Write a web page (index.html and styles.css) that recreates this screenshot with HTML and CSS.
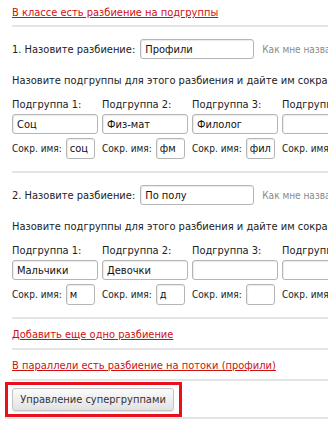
FILE: index.html
```html
<!DOCTYPE html>
<html lang="ru">
<head>
    <meta charset="UTF-8">
    <title>Разбиения</title>
    <link rel="stylesheet" href="styles.css">
</head>
<body>
    <div class="page">
        <div class="section first">
            <a href="#" class="red-link">В классе есть разбиение на подгруппы</a>
        </div>

        <div class="split">
            <div class="split-name">
                <span>1. Назовите разбиение:</span>
                <input type="text" class="name-input" value="Профили">
                <span class="hint">Как мне назвать разбиение?</span>
            </div>
            <div class="split-text">Назовите подгруппы для этого разбиения и дайте им сокращенные имена</div>
            <div class="groups">
                <div class="group">
                    <div class="group-label">Подгруппа 1:</div>
                    <input type="text" class="group-input" value="Соц">
                    <div class="short"><span>Сокр. имя:</span><input type="text" class="short-input" value="соц"></div>
                </div>
                <div class="group">
                    <div class="group-label">Подгруппа 2:</div>
                    <input type="text" class="group-input" value="Физ-мат">
                    <div class="short"><span>Сокр. имя:</span><input type="text" class="short-input" value="фм"></div>
                </div>
                <div class="group">
                    <div class="group-label">Подгруппа 3:</div>
                    <input type="text" class="group-input" value="Филолог">
                    <div class="short"><span>Сокр. имя:</span><input type="text" class="short-input" value="фил"></div>
                </div>
                <div class="group">
                    <div class="group-label">Подгруппа 4:</div>
                    <input type="text" class="group-input" value="">
                    <div class="short"><span>Сокр. имя:</span><input type="text" class="short-input" value=""></div>
                </div>
            </div>
        </div>

        <div class="split">
            <div class="split-name">
                <span>2. Назовите разбиение:</span>
                <input type="text" class="name-input" value="По полу">
                <span class="hint">Как мне назвать разбиение?</span>
            </div>
            <div class="split-text">Назовите подгруппы для этого разбиения и дайте им сокращенные имена</div>
            <div class="groups">
                <div class="group">
                    <div class="group-label">Подгруппа 1:</div>
                    <input type="text" class="group-input" value="Мальчики">
                    <div class="short"><span>Сокр. имя:</span><input type="text" class="short-input" value="м"></div>
                </div>
                <div class="group">
                    <div class="group-label">Подгруппа 2:</div>
                    <input type="text" class="group-input" value="Девочки">
                    <div class="short"><span>Сокр. имя:</span><input type="text" class="short-input" value="д"></div>
                </div>
                <div class="group">
                    <div class="group-label">Подгруппа 3:</div>
                    <input type="text" class="group-input" value="">
                    <div class="short"><span>Сокр. имя:</span><input type="text" class="short-input" value=""></div>
                </div>
                <div class="group">
                    <div class="group-label">Подгруппа 4:</div>
                    <input type="text" class="group-input" value="">
                    <div class="short"><span>Сокр. имя:</span><input type="text" class="short-input" value=""></div>
                </div>
            </div>
        </div>

        <div class="section">
            <a href="#" class="red-link">Добавить еще одно разбиение</a>
        </div>

        <div class="section">
            <a href="#" class="red-link">В параллели есть разбиение на потоки (профили)</a>
        </div>

        <div class="button-row">
            <div class="highlight">
                <button type="button" class="btn">Управление супергруппами</button>
            </div>
        </div>
    </div>
</body>
</html>
```

FILE: styles.css
```css
body {
    margin: 0;
    background-color: #fff;
    font-family: "DejaVu Sans Condensed", "DejaVu Sans", sans-serif;
    font-size: 11px;
    line-height: 13px;
    color: #222;
    overflow: hidden;
}

.page {
    width: 600px;
    padding-left: 12px;
}

.section {
    border-bottom: 2px solid #e4e4e4;
    padding: 9px 0 7px;
}

.section.first {
    padding: 6px 0 6px;
}

.red-link {
    color: #cc1111;
    text-decoration: underline;
}

.split {
    border-bottom: 2px solid #e4e4e4;
    padding: 12px 0 12px;
}

.split-name {
    display: flex;
    align-items: center;
    white-space: nowrap;
}

.name-input {
    width: 114px;
    margin-left: 5px;
}

.hint {
    margin-left: 8px;
    font-size: 10px;
    color: #8a8a8a;
}

.split-text {
    margin-top: 15px;
    white-space: nowrap;
}

.groups {
    display: flex;
    gap: 4px;
    margin-top: 11px;
}

.group {
    width: 86px;
    flex-shrink: 0;
}

.group-label {
    white-space: nowrap;
    margin-bottom: 3px;
}

input {
    box-sizing: border-box;
    height: 20px;
    border: 1px solid #b5b5b5;
    border-radius: 3px;
    padding: 0 4px;
    font-family: "DejaVu Sans Condensed", "DejaVu Sans", sans-serif;
    font-size: 11px;
    color: #111;
    box-shadow: inset 1px 1px 1px rgba(0, 0, 0, 0.08);
}

.group-input {
    width: 86px;
}

.short {
    display: flex;
    align-items: center;
    margin-top: 4px;
    white-space: nowrap;
    font-size: 10px;
}

.short-input {
    width: 29px;
    height: 21px;
    margin-left: 4px;
    padding: 0 3px;
}

.button-row {
    border-bottom: 2px solid #e4e4e4;
    padding: 1px 0 0;
    margin-left: -7px;
}

.highlight {
    display: inline-block;
    border: 3px solid #e8101c;
    padding: 3px 5px 3px 4px;
}

.btn {
    display: block;
    width: 162px;
    height: 23px;
    padding: 0;
    border: 1px solid #c4c4c4;
    border-radius: 3px;
    background: linear-gradient(#fbfbfb, #e2e2e2);
    box-shadow: 0 1px 1px rgba(0, 0, 0, 0.12);
    font-family: "DejaVu Sans Condensed", "DejaVu Sans", sans-serif;
    font-size: 11px;
    color: #333;
}
```
